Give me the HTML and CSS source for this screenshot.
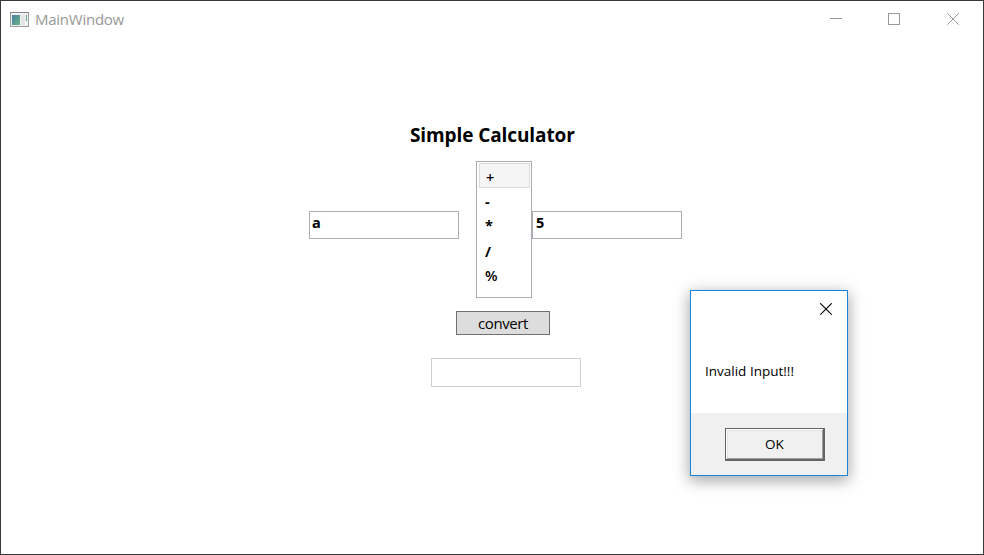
FILE: index.html
```html
<!DOCTYPE html>
<html lang="en">
<head>
<meta charset="utf-8">
<title>MainWindow</title>
<link rel="stylesheet" href="styles.css">
</head>
<body>
<div class="window">
  <header class="titlebar">
    <svg class="app-icon" width="19" height="15" viewBox="0 0 19 15">
      <defs><linearGradient id="pane" x1="0" y1="0" x2="1" y2="1"><stop offset="0" stop-color="#4a7fa0"/><stop offset="1" stop-color="#69b58a"/></linearGradient></defs>
      <rect x=".5" y=".5" width="18" height="14" fill="#f1f1f1" stroke="#9c9c9c"/>
      <path d="M0 .5H19" stroke="#858a91"/>
      <rect x="2" y="3" width="8" height="10" fill="url(#pane)"/>
      <rect x="11" y="3" width="4" height="10" fill="#e5e5e5"/>
      <path d="M16.5 3V9" stroke="#63a795"/>
    </svg>
    <span class="caption">MainWindow</span>
    <div class="controls">
      <svg width="58" height="36" viewBox="0 0 58 36"><path d="M19 17.5H31"/></svg>
      <svg width="58" height="36" viewBox="0 0 58 36"><rect x="19.5" y="12.5" width="11" height="11"/></svg>
      <svg width="58" height="36" viewBox="0 0 58 36"><path d="M20.2 12.2L31.8 23.8M31.8 12.2L20.2 23.8"/></svg>
    </div>
  </header>
  <main class="content">
    <h1 class="heading">Simple Calculator</h1>
    <div class="operands">
      <div class="field">a</div>
      <ul class="operators">
        <li class="op selected">+</li>
        <li class="op">-</li>
        <li class="op star">*</li>
        <li class="op">/</li>
        <li class="op percent">%</li>
      </ul>
      <div class="field second">5</div>
    </div>
    <button class="convert"><span>convert</span></button>
    <div class="result"></div>
  </main>
  <div class="dialog">
    <div class="dialog-top">
      <svg class="dialog-close" width="12" height="12" viewBox="0 0 12 12"><path d="M.2 .2L11.8 11.8M11.8 .2L.2 11.8"/></svg>
      <p class="message">Invalid Input!!!</p>
    </div>
    <div class="dialog-footer"><button class="ok">OK</button></div>
  </div>
</div>
</body>
</html>
```
FILE: styles.css
```css
* { box-sizing: border-box; }
body { margin: 0; overflow: hidden; font-family: "Open Sans", "Noto Sans", sans-serif; color: #000; }
.window { position: relative; width: 984px; height: 555px; border: 1px solid #38383a; background: #fff; }
.titlebar { display: flex; height: 36px; align-items: center; padding-left: 9px; color: #999; }
.app-icon { flex: none; }
.caption { margin-left: 6px; font-family: "Open Sans", sans-serif; font-size: 15px; line-height: 20px; letter-spacing: -.25px; }
.controls { display: flex; margin-left: auto; margin-right: -2px; }
.controls svg { fill: none; stroke: #999; stroke-width: 1; }
.content { display: flex; flex-direction: column; }
.heading { margin: 84px 0 0 409px; height: 28px; font-size: 19px; line-height: 28px; font-weight: 700; letter-spacing: -.1px; white-space: nowrap; }
.operands { display: flex; align-items: flex-start; margin: 12px 0 0 308px; }
.field { width: 150px; height: 28px; margin-top: 50px; padding: 0 2px; border: 1px solid #abadb3; font-size: 14.5px; line-height: 22px; font-weight: 700; }
.second { padding-left: 3px; }
.operators { width: 56px; height: 137px; margin: 0 0 0 17px; padding: 1px 1px 1px 2px; border: 1px solid #abadb3; list-style: none; }
.op { height: 25px; padding: 3px 6px 0; font-size: 14.5px; line-height: 22px; font-weight: 700; }
.selected { border: 1px solid #dadada; background: #f5f5f5; font-weight: 600; }
.star { padding-top: 2px; }
.percent { padding-top: 2px; font-weight: 600; }
.convert { width: 94px; height: 24px; margin: 13px 0 0 455px; padding: 0; border: 1px solid #707070; background: #ddd; color: #000; font-family: inherit; font-size: 15px; line-height: 22px; letter-spacing: -.4px; }
.result { width: 150px; height: 29px; margin: 23px 0 0 430px; border: 1px solid #cfd0d3; }
.dialog { position: absolute; left: 689px; top: 289px; display: flex; flex-direction: column; width: 158px; height: 186px; border: 1px solid #1883d7; background: #fff; box-shadow: 0 4px 14px 1px rgba(0,0,0,.34); }
.dialog-top { display: flex; flex-direction: column; height: 122px; padding: 12px 15px 0 14px; }
.dialog-close { align-self: flex-end; fill: none; stroke: #000; stroke-width: 1.1; }
.message { margin: 46px 0 0; font-size: 13.5px; line-height: 20px; white-space: nowrap; }
.dialog-footer { flex: 1; padding: 15px 22px 0 34px; background: #f0f0f0; }
.ok { display: block; width: 100px; height: 33px; padding: 0; border: 1px solid #646464; border-right-width: 2px; border-bottom-width: 2px; background: #f0f0f0; box-shadow: inset 1px 1px #fff, inset -1px -1px #a0a0a0, inset 2px 2px #e3e3e3; color: #000; font-family: inherit; font-size: 13.5px; line-height: 20px; }
```
